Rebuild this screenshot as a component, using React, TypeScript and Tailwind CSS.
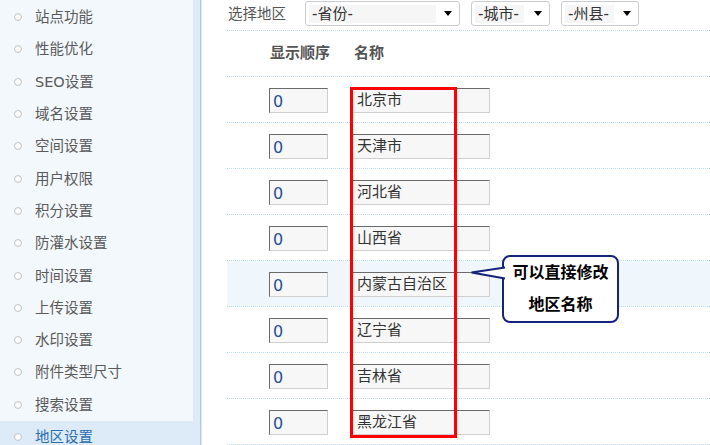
import React from "react";

const menu = [
  "站点功能",
  "性能优化",
  "SEO设置",
  "域名设置",
  "空间设置",
  "用户权限",
  "积分设置",
  "防灌水设置",
  "时间设置",
  "上传设置",
  "水印设置",
  "附件类型尺寸",
  "搜索设置",
  "地区设置",
];

const regions = ["北京市", "天津市", "河北省", "山西省", "内蒙古自治区", "辽宁省", "吉林省", "黑龙江省"];

const font = { fontFamily: '"DejaVu Sans", "Noto Sans CJK SC", sans-serif' };

function Select({ label, w, inner }: { label: string; w: string; inner: string }) {
  return (
    <div className={`flex items-center h-[25px] rounded-[3px] border border-[#c9cdd2] bg-white pl-[3px] pr-[7px] ${w}`}>
      <span className={`h-[18px] flex items-center bg-[#f6f6f6] text-[15px] leading-[18px] text-[#333] pl-[3px] ${inner}`}>{label}</span>
      <span className="ml-auto w-0 h-0 border-l-[4px] border-r-[4px] border-t-[5px] border-l-transparent border-r-transparent border-t-black" />
    </div>
  );
}

export default function App() {
  return (
    <div className="relative flex w-[710px] h-[445px] overflow-hidden bg-white" style={font}>
      {/* Sidebar */}
      <div className="flex shrink-0 h-full">
        <div className="w-[193px] bg-[#f2f8fc] h-full flex flex-col pt-px">
          {menu.map((m, i) => {
            const active = i === menu.length - 1;
            return (
              <div
                key={m}
                className={`flex items-center h-[32.3px] shrink-0 pl-[14px] ${active ? "bg-[#dcebf7] text-[#2a6cb0]" : "text-[#5a5a5a]"}`}
              >
                <span className="w-[8px] h-[8px] rounded-full border border-[#c4c4c4] bg-white shadow-[inset_0_0_1px_#ddd]" />
                <span className="ml-[13px] text-[14.5px] leading-[20px]">{m}</span>
              </div>
            );
          })}
        </div>
        <div className="w-[7px] bg-[#dcebf7] h-full" />
        <div className="w-px bg-[#b4cbdc] h-full" />
        <div className="w-px bg-[#dbe7f0] h-full" />
      </div>

      {/* Content */}
      <div className="flex-1 pl-[25px] flex flex-col">
        <div className="flex items-center h-[31px] border-b border-dotted border-[#bcdcef] pl-px pt-[5px] pb-px">
          <span className="text-[14.5px] text-[#555] leading-[20px] -mt-[6px]">选择地区</span>
          <div className="ml-[19px] flex items-center gap-[11px] -mt-[6px]">
            <Select label="-省份-" w="w-[155px]" inner="w-[127px]" />
            <Select label="-城市-" w="w-[79px]" inner="w-[49px]" />
            <Select label="-州县-" w="w-[78px]" inner="w-[49px]" />
          </div>
        </div>
        <div className="flex items-center h-[47px] border-b border-dotted border-[#bcdcef] font-bold text-[15px] text-[#555]">
          <span className="ml-[43px]">显示顺序</span>
          <span className="ml-[24px]">名称</span>
        </div>
        {regions.map((r, i) => (
          <div
            key={r}
            className={`flex items-start h-[46px] shrink-0 border-b border-dotted border-[#bcdcef] pl-[42px] pt-[11px] ${i === 4 ? "bg-[#f0f7fc]" : ""}`}
          >
            <div className="w-[59px] h-[25px] bg-[#f7f7f7] border-t border-l border-t-[#6a6a6a] border-l-[#6a6a6a] border-b border-r border-b-[#cfcfcf] border-r-[#cfcfcf] flex items-center pl-[3px] text-[16px] text-[#2a4f96] leading-none pt-[3px]">
              0
            </div>
            <div className="ml-[24px] w-[138px] h-[25px] bg-[#f7f7f7] border-t border-l border-t-[#6a6a6a] border-l-[#6a6a6a] border-b border-r border-b-[#cfcfcf] border-r-[#cfcfcf] flex items-center pl-[4px] text-[15px] text-[#333] leading-none">
              {r}
            </div>
          </div>
        ))}
      </div>

      {/* Red highlight frame */}
      <div className="absolute left-[350px] top-[87px] w-[107px] h-[351px] border-[3px] border-[#ff0000]" />

      {/* Callout */}
      <div className="absolute left-[502px] top-[255px] w-[117px] h-[68px] rounded-[8px] border-2 border-[#16237a] bg-white flex flex-col items-center justify-center text-[16px] font-bold text-black leading-[32px]">
        <span>可以直接修改</span>
        <span>地区名称</span>
      </div>
      <svg className="absolute left-[468px] top-[264px]" width="40" height="20" viewBox="0 0 40 20">
        <path d="M37 3.5 L3.5 8.5 L37 14.5" fill="white" stroke="#16237a" strokeWidth="2" strokeLinejoin="miter" />
      </svg>
    </div>
  );
}
